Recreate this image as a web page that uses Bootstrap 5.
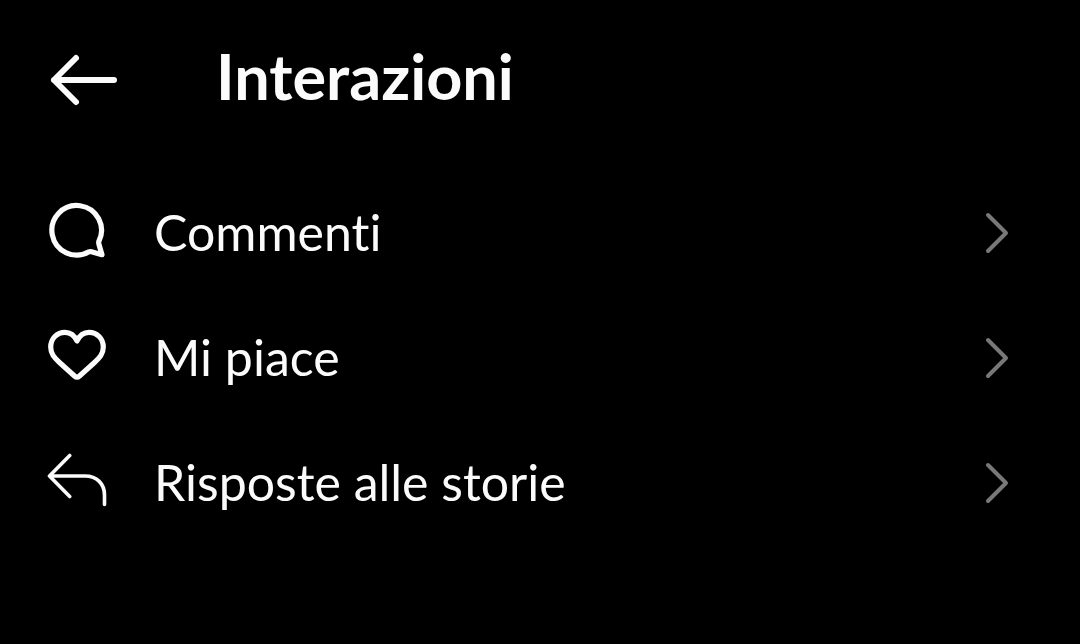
<!DOCTYPE html>
<html lang="it">
<head>
<meta charset="utf-8">
<meta name="viewport" content="width=device-width, initial-scale=1">
<title>Interazioni</title>
<link href="https://cdn.jsdelivr.net/npm/bootstrap@5.3.0/dist/css/bootstrap.min.css" rel="stylesheet">
<style>
  body { background: #000; color: #fbfbfb; font-family: Lato, "Noto Sans", sans-serif; font-variant-ligatures: none; }
  svg { display: block; flex: none; fill: none; stroke: currentColor; stroke-linecap: round; stroke-linejoin: round; }
  .topbar { height: 160px; padding: 0 48px; gap: 96px; }
  .topbar h1 { font-size: 63px; line-height: 72px; }
  .back { color: inherit; }
  .option { height: 125px; padding: 0 68px 0 47px; gap: 47px; color: inherit; font-size: 50px; line-height: 60px; }
  .option:hover, .option:focus { color: inherit; }
  .options { padding-top: 9px; }
  .chevron { color: #787878; }
</style>
</head>
<body>
<header class="topbar d-flex align-items-center">
  <button type="button" class="back btn p-0 border-0" aria-label="Indietro">
    <svg width="72" height="60" viewBox="0 0 72 60" stroke-width="6"><path d="M28 8 6 30l22 22M6 30h60"/></svg>
  </button>
  <h1 class="fw-bold m-0 pb-2">Interazioni</h1>
</header>
<main class="options">
  <nav class="d-flex flex-column" aria-label="Interazioni">
    <a href="#commenti" class="option d-flex align-items-center text-decoration-none">
      <svg width="60" height="60" viewBox="0 0 60 60" stroke-width="5.2"><path d="M51.8 39.5A24.8 24.8 0 1 0 42 49.8Q43 49.3 44.5 49.7L55 52.7 52 42.5Q51.5 40.7 51.8 39.5Z"/></svg>
      <span class="flex-grow-1">Commenti</span>
      <svg class="chevron" width="28" height="46" viewBox="0 0 28 46" stroke-width="4"><path d="m4 6 18 18L4 42"/></svg>
    </a>
    <a href="#mi-piace" class="option d-flex align-items-center text-decoration-none">
      <svg width="60" height="60" viewBox="0 0 60 60" stroke-width="5.2"><path d="M30 14C27.5 8.5 23.5 5.3 18 5.3C10 5.3 3.7 11.5 3.7 20C3.7 27 7.5 31 12.5 35.5L27.5 49Q30 51.2 32.5 49L47.500 35.500C52.5 31 56.3 27 56.3 20C56.3 11.5 50 5.3 42 5.3C36.5 5.3 32.5 8.5 30 14Z"/></svg>
      <span class="flex-grow-1">Mi piace</span>
      <svg class="chevron" width="28" height="46" viewBox="0 0 28 46" stroke-width="4"><path d="m4 6 18 18L4 42"/></svg>
    </a>
    <a href="#risposte" class="option d-flex align-items-center text-decoration-none">
      <svg width="60" height="60" viewBox="0 0 60 60" stroke-width="3.6"><path d="M22.7 3.5 2.5 24l20.2 20.5M2.5 24H38C50 24 57.5 32 57.5 43V52.5"/></svg>
      <span class="flex-grow-1">Risposte alle storie</span>
      <svg class="chevron" width="28" height="46" viewBox="0 0 28 46" stroke-width="4"><path d="m4 6 18 18L4 42"/></svg>
    </a>
  </nav>
</main>
<script src="https://cdn.jsdelivr.net/npm/bootstrap@5.3.0/dist/js/bootstrap.bundle.min.js"></script>
</body>
</html>
